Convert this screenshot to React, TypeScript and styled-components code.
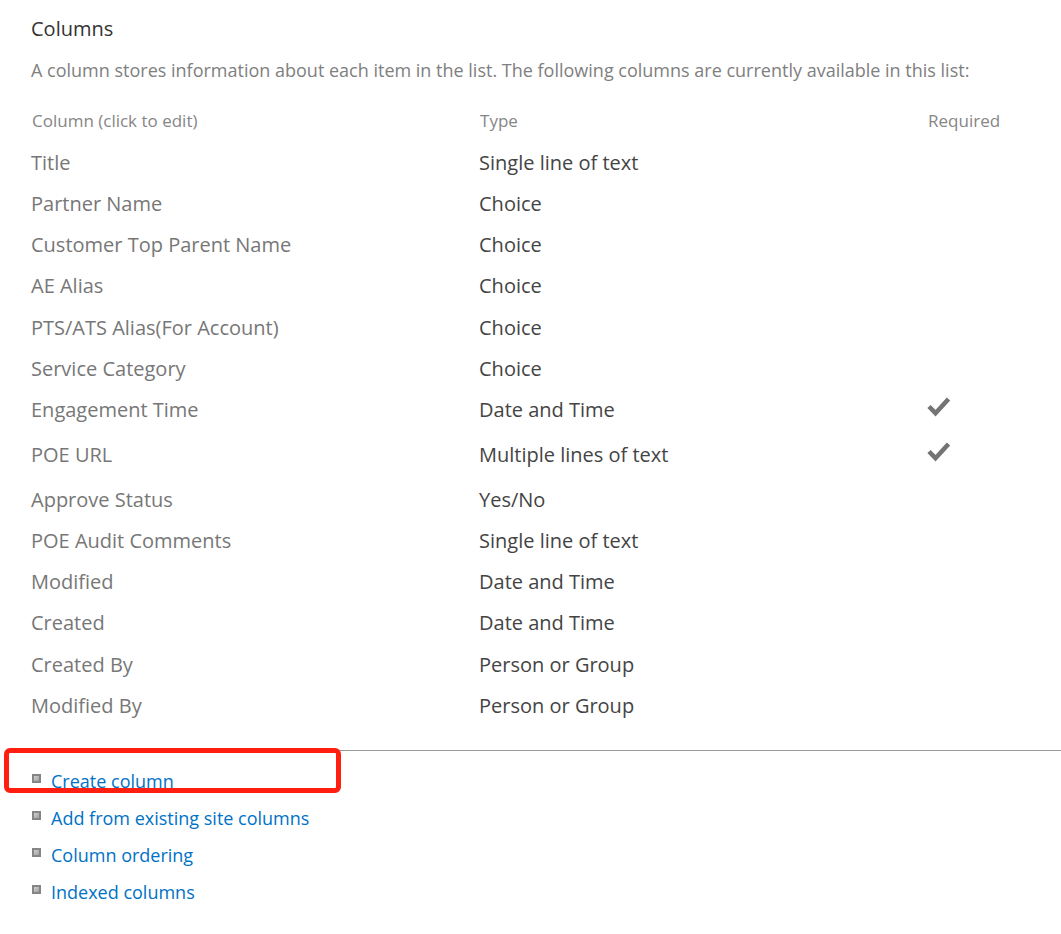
import React from "react";
import styled, { createGlobalStyle } from "styled-components";

const GlobalStyle = createGlobalStyle`
  body {
    margin: 0;
    background: #fff;
    font-family: "Segoe UI", "Open Sans", "Noto Sans", sans-serif;
    color: #444;
  }
`;

const Page = styled.main`
  padding: 16px 0 28px 31px;
`;

const Heading = styled.h1`
  margin: 0;
  font-size: 20px;
  line-height: 26px;
  font-weight: 400;
  color: #333;
`;

const Description = styled.p`
  margin: 16px 0 0;
  font-size: 18px;
  line-height: 24px;
  color: #808080;
`;

const ColumnTable = styled.table`
  width: 100%;
  margin-top: 27px;
  border-collapse: collapse;
  table-layout: fixed;
`;

const HeaderCell = styled.th<{ $width?: string }>`
  width: ${(p) => p.$width ?? "auto"};
  height: 41px;
  padding: 0 0 0 1px;
  font-size: 17px;
  line-height: 24px;
  font-weight: 400;
  text-align: left;
  vertical-align: top;
  color: #868686;
`;

const Row = styled.tr`
  height: 41px;

  &:nth-child(4n) {
    height: 42px;
  }
`;

const Cell = styled.td`
  padding: 0;
  font-size: 20px;
  line-height: 26px;
  vertical-align: top;
`;

const ColumnLink = styled.a`
  color: #777;
  text-decoration: none;
`;

const CheckIcon = styled.svg`
  display: block;
  width: 24px;
  height: 24px;
  padding-bottom: 21px;
`;

const Actions = styled.section`
  position: relative;
  margin-top: 16px;
  border-top: 1px solid #999;
  padding-top: 18px;
`;

const Highlight = styled.div`
  position: absolute;
  top: -3px;
  left: -27px;
  width: 337px;
  height: 45px;
  box-sizing: border-box;
  border: 5px solid #ff1e10;
  border-radius: 6px;
  pointer-events: none;
`;

const ActionList = styled.ul`
  display: grid;
  gap: 12px;
  margin: 0;
  padding: 0 0 0 1px;
  list-style: none;
`;

const ActionItem = styled.li`
  display: flex;
  align-items: flex-start;
  gap: 10px;
  font-size: 18px;
  line-height: 25px;
`;

const Bullet = styled.span`
  width: 9px;
  height: 9px;
  margin-top: 5px;
  box-sizing: border-box;
  border: 2px solid #858585;
  background: linear-gradient(135deg, #d0d0d0, #a0a0a0);
`;

const ActionLink = styled.a`
  color: #0072c6;
  text-decoration: none;
`;

type ColumnInfo = { name: string; type: string; required?: boolean };

const columns: ColumnInfo[] = [
  { name: "Title", type: "Single line of text" },
  { name: "Partner Name", type: "Choice" },
  { name: "Customer Top Parent Name", type: "Choice" },
  { name: "AE Alias", type: "Choice" },
  { name: "PTS/ATS Alias(For Account)", type: "Choice" },
  { name: "Service Category", type: "Choice" },
  { name: "Engagement Time", type: "Date and Time", required: true },
  { name: "POE URL", type: "Multiple lines of text", required: true },
  { name: "Approve Status", type: "Yes/No" },
  { name: "POE Audit Comments", type: "Single line of text" },
  { name: "Modified", type: "Date and Time" },
  { name: "Created", type: "Date and Time" },
  { name: "Created By", type: "Person or Group" },
  { name: "Modified By", type: "Person or Group" },
];

const actions = [
  "Create column",
  "Add from existing site columns",
  "Column ordering",
  "Indexed columns",
];

export default function App() {
  return (
    <>
      <GlobalStyle />
      <Page>
        <Heading>Columns</Heading>
        <Description>
          A column stores information about each item in the list. The following
          columns are currently available in this list:
        </Description>
        <ColumnTable>
          <thead>
            <tr>
              <HeaderCell scope="col" $width="43.4%">
                Column (click to edit)
              </HeaderCell>
              <HeaderCell scope="col" $width="43.4%">
                Type
              </HeaderCell>
              <HeaderCell scope="col">Required</HeaderCell>
            </tr>
          </thead>
          <tbody>
            {columns.map((c) => (
              <Row key={c.name}>
                <Cell>
                  <ColumnLink href="#">{c.name}</ColumnLink>
                </Cell>
                <Cell>{c.type}</Cell>
                <Cell>
                  {c.required && (
                    <CheckIcon viewBox="0 0 24 24" role="img" aria-label="Required">
                      <path
                        d="M2 9.5 L8.5 16.2 L21.5 2"
                        fill="none"
                        stroke="#747474"
                        strokeWidth="4.6"
                      />
                    </CheckIcon>
                  )}
                </Cell>
              </Row>
            ))}
          </tbody>
        </ColumnTable>
        <Actions>
          <ActionList>
            {actions.map((label) => (
              <ActionItem key={label}>
                <Bullet />
                <ActionLink href="#">{label}</ActionLink>
              </ActionItem>
            ))}
          </ActionList>
          <Highlight />
        </Actions>
      </Page>
    </>
  );
}
